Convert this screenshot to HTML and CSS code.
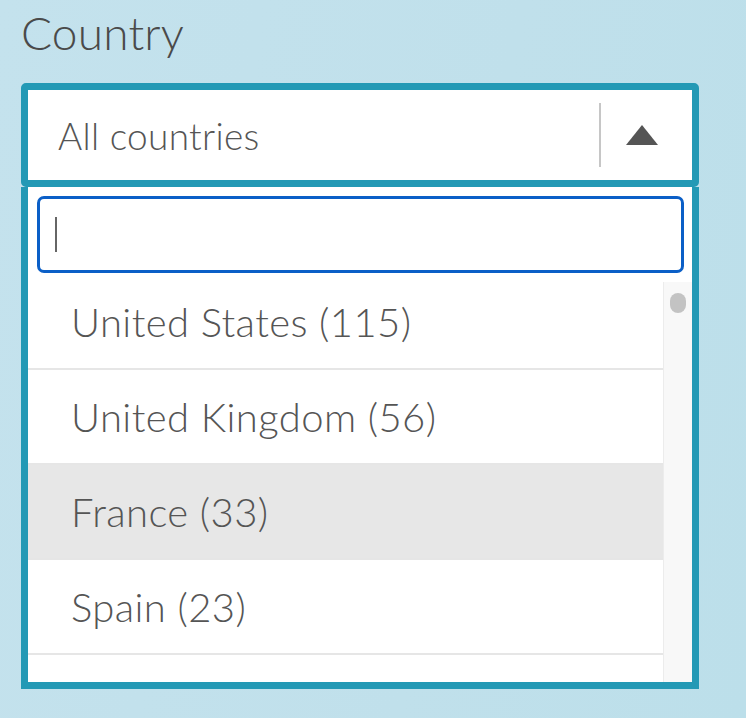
FILE: index.html
```html
<!DOCTYPE html>
<html lang="en">
<head>
<meta charset="utf-8">
<title>Country filter</title>
<link rel="stylesheet" href="styles.css">
</head>
<body>
<div class="field">
  <div class="label">Country</div>
  <div class="select">
    <div class="value">All countries</div>
    <div class="sep"></div>
    <div class="arrow">
      <svg width="32" height="20" viewBox="0 0 32 20"><polygon points="16,0 32,20 0,20" fill="#555"/></svg>
    </div>
  </div>
  <div class="dropdown">
    <div class="search-wrap">
      <div class="search"><span class="caret"></span></div>
    </div>
    <div class="list">
      <div class="options">
        <div class="opt">United States (115)</div>
        <div class="opt">United Kingdom (56)</div>
        <div class="opt active">France (33)</div>
        <div class="opt">Spain (23)</div>
        <div class="opt"></div>
      </div>
      <div class="scroll"><div class="thumb"></div></div>
    </div>
  </div>
</div>
</body>
</html>
```
FILE: styles.css
```css
html, body {
  margin: 0;
  padding: 0;
}
body {
  width: 746px;
  height: 718px;
  overflow: hidden;
  background: linear-gradient(100deg, #c4e2ed 0%, #c0e0eb 60%, #bcdfea 100%);
  font-family: Lato, "Open Sans", sans-serif;
  font-weight: 300;
  color: #555;
}
.field {
  padding: 0 47px 0 21px;
}
.label {
  font-size: 46px;
  line-height: 52px;
  padding: 7px 0 0 0;
  margin-bottom: 24px;
  letter-spacing: 0.2px;
  color: #4a4a4a;
}
.select {
  display: flex;
  align-items: center;
  height: 90px;
  background: #fff;
  border: 7px solid #2399b5;
  border-radius: 5px;
}
.value {
  flex: 1;
  padding-left: 30px;
  font-size: 37px;
  letter-spacing: 0.3px;
  color: #555;
}
.sep {
  width: 2px;
  height: 64px;
  background: #c6c6c6;
}
.arrow {
  width: 91px;
  padding-left: 25px;
  box-sizing: border-box;
  display: flex;
  align-items: center;
}
.arrow svg {
  display: block;
}
.dropdown {
  background: #fff;
  border: 7px solid #2399b5;
  border-top: 0;
  height: 495px;
  display: flex;
  flex-direction: column;
}
.search-wrap {
  padding: 9px 8px 2px 9px;
}
.search {
  height: 71px;
  border: 3px solid #0b5fc7;
  border-radius: 7px;
  display: flex;
  align-items: center;
  padding-left: 15px;
}
.caret {
  width: 2px;
  height: 35px;
  background: #666;
}
.list {
  flex: 1;
  display: flex;
  overflow: hidden;
}
.options {
  flex: 1;
}
.opt {
  height: 93px;
  border-bottom: 2px solid #e6e6e6;
  padding-left: 43px;
  display: flex;
  align-items: center;
  font-size: 40px;
  letter-spacing: 0.4px;
  color: #555;
}
.opt.active {
  background: #e7e7e7;
}
.scroll {
  width: 28px;
  margin-top: 7px;
  background: #f8f8f8;
  border-left: 1px solid #ececec;
}
.thumb {
  width: 16px;
  height: 20px;
  margin: 11px auto 0;
  border-radius: 8px;
  background: #c3c3c3;
}
```
